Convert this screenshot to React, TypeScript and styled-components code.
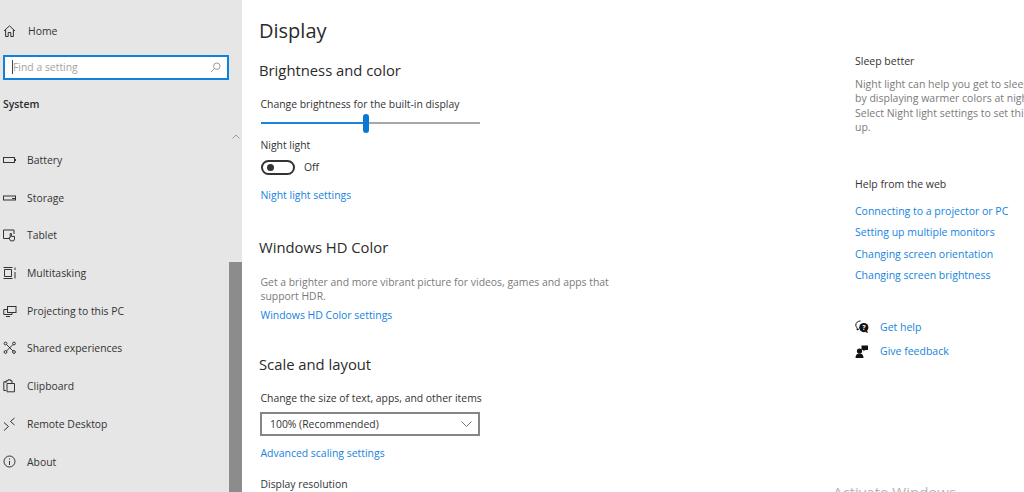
import React from "react";
import styled, { createGlobalStyle } from "styled-components";

const Global = createGlobalStyle`
  html, body { margin: 0; padding: 0; background: #fff; }
  body { font-family: "Open Sans", "Noto Sans", "Liberation Sans", sans-serif; color: #1f1f1f; overflow: hidden; }
  * { box-sizing: border-box; }
`;

const Page = styled.div`
  position: relative;
  width: 1024px;
  height: 492px;
  overflow: hidden;
  display: flex;
  background: #fff;
`;

const Sidebar = styled.aside`
  width: 242px;
  height: 492px;
  flex: none;
  background: #e6e6e6;
  display: flex;
`;

const SideContent = styled.div`
  width: 229px;
  flex: none;
  display: flex;
  flex-direction: column;
`;

const ScrollTrack = styled.div`
  width: 13px;
  flex: none;
  padding-top: 134px;
  display: flex;
  flex-direction: column;
  align-items: center;
  color: #9a9a9a;
`;

const ScrollThumb = styled.div`
  width: 100%;
  flex: 1;
  margin-top: 123px;
  background: #8c8c8c;
`;

const NavRow = styled.div`
  height: 37.7px;
  flex: none;
  display: flex;
  align-items: center;
  padding-left: 3px;
  font-size: 10.4px;
  color: #333;
`;

const HomeRow = styled(NavRow)`
  margin-top: 12px;
`;

const HomeLabel = styled.span`
  margin-left: 1px;
`;

const IconSlot = styled.span`
  width: 24px;
  height: 14px;
  flex: none;
  display: flex;
  align-items: center;
  color: #333;
`;

const SearchBox = styled.div`
  width: 226px;
  height: 25px;
  margin: 5px 0 0 3px;
  border: 2px solid #0f82dc;
  background: #fff;
  display: flex;
  align-items: center;
  padding: 0 6px 0 7px;
  font-size: 10.4px;
  color: #a3a3a3;
`;

const Caret = styled.span`
  width: 1px;
  height: 14px;
  background: #444;
  flex: none;
`;

const SearchText = styled.span`
  flex: 1;
`;

const SystemLabel = styled.div`
  margin: 15px 0 0 3px;
  height: 18px;
  line-height: 18px;
  font-size: 10.4px;
  font-weight: 600;
  color: #2b2b2b;
`;

const NavList = styled.nav`
  margin-top: 28.5px;
  display: flex;
  flex-direction: column;
`;

const Main = styled.main`
  width: 596px;
  flex: none;
  padding: 16px 0 0 17px;
`;

const Title = styled.h1`
  margin: 0;
  font-size: 20px;
  line-height: 30px;
  font-weight: 400;
  color: #2b2b2b;
`;

const Section = styled.h2<{ $top: number }>`
  margin: ${(p) => p.$top}px 0 0;
  font-size: 14.8px;
  line-height: 20px;
  font-weight: 400;
  color: #2b2b2b;
`;

const Label = styled.div<{ $top: number }>`
  font-size: 10.4px;
  line-height: 16px;
  margin: ${(p) => p.$top}px 0 0 1.5px;
  color: #333;
`;

const Link = styled.div`
  font-size: 10.5px;
  line-height: 16px;
  color: #1583e0;
`;

const MainLink = styled(Link)<{ $top: number }>`
  font-size: 10.45px;
  margin: ${(p) => p.$top}px 0 0 1.5px;
`;

const Slider = styled.div`
  width: 219px;
  height: 20px;
  margin: 1px 0 0 2px;
  display: flex;
  align-items: center;
`;

const TrackFill = styled.div`
  width: 102px;
  height: 2px;
  background: #1a84dc;
`;

const TrackRest = styled.div`
  height: 2px;
  flex: 1;
  background: #a8a8a8;
`;

const Thumb = styled.div`
  width: 6px;
  height: 19px;
  border-radius: 3px;
  background: #0878d4;
  flex: none;
`;

const ToggleRow = styled.div`
  display: flex;
  align-items: center;
  height: 16px;
  margin: 6px 0 0 2px;
  gap: 9px;
  font-size: 10.4px;
  color: #333;
`;

const Toggle = styled.div`
  width: 34px;
  height: 15px;
  border: 2px solid #333;
  border-radius: 8px;
  display: flex;
  align-items: center;
  padding-left: 4px;
`;

const Knob = styled.div`
  width: 7px;
  height: 7px;
  border-radius: 50%;
  background: #333;
`;

const Paragraph = styled.p`
  margin: 18px 0 0 1.5px;
  width: 360px;
  font-size: 10.4px;
  line-height: 14px;
  color: #7a7a7a;
`;

const Select = styled.div`
  width: 220px;
  height: 24px;
  margin: 6px 0 0 1px;
  border: 2px solid #868686;
  display: flex;
  align-items: center;
  justify-content: space-between;
  padding: 0 6px 0 8px;
  font-size: 10.4px;
  color: #333;
`;

const Aside = styled.aside`
  flex: none;
  width: 186px;
  padding: 53px 0 0 17px;
  white-space: nowrap;
`;

const AsideHeading = styled.div<{ $top?: number }>`
  margin-top: ${(p) => p.$top ?? 0}px;
  font-size: 10.5px;
  line-height: 16px;
  color: #333;
`;

const AsideText = styled.div`
  margin-top: 8px;
  font-size: 10.5px;
  line-height: 14.3px;
  color: #7a7a7a;
`;

const LinkList = styled.div`
  margin-top: 11px;
  display: flex;
  flex-direction: column;
  gap: 5.2px;
`;

const HelpRow = styled.div`
  display: flex;
  align-items: center;
  gap: 11px;
  height: 16px;
`;

const HelpList = styled.div`
  margin-top: 36px;
  display: flex;
  flex-direction: column;
  gap: 8.5px;
`;

const Watermark = styled.div`
  position: absolute;
  left: 833px;
  top: 482px;
  font-size: 15px;
  line-height: 20px;
  color: #b5b5b5;
  white-space: nowrap;
`;

const Svg: React.FC<{ children: React.ReactNode }> = ({ children }) => (
  <svg width={14} height={14} viewBox="0 0 14 14" fill="none" stroke="currentColor" strokeWidth="1">{children}</svg>
);

const icons: Record<string, React.ReactNode> = {
  home: <Svg><path d="M1 7 6.5 1.8 12 7M2.6 5.8V12.5H5.2V8.5H7.8V12.5H10.4V5.8" /></Svg>,
  battery: <Svg><rect x=".5" y="4.5" width="11" height="5" /><path d="M12.5 6V8" /></Svg>,
  storage: <Svg><rect x=".5" y="5" width="12" height="4" /><path d="M9 7.5H12" /></Svg>,
  tablet: <Svg><path d="M6 10.5H.5V2H11V6" /><path d="M7.5 12.8 6 9.8 7.2 9.5V5.5H8.4V8.4H11.5V11L10.8 12.8Z" /></Svg>,
  multi: <Svg><path d="M.5 1.5H9.5M.5 12.5H9.5M1.5 3.5H8.5V10.5H1.5ZM12 1.5V4M12 6V12.5" /></Svg>,
  project: <Svg><rect x="4.5" y="2.5" width="8.5" height="6" /><path d="M4.5 5.5H.8V10.5H9V8.5M3 12.5H7" /></Svg>,
  shared: <Svg><circle cx="2.5" cy="2.5" r="1.4" /><circle cx="11" cy="2.5" r="1.4" /><circle cx="2.5" cy="11" r="1.4" /><circle cx="11" cy="11" r="1.4" /><path d="M3.6 3.6 9.9 9.9M9.9 3.6 3.6 9.9" /></Svg>,
  clip: <Svg><path d="M3 11.5H.8V2.8H3M4 12.8H11.5V4.5H4ZM3 4V1.8H5V.8H7.5V1.8H9V4" /></Svg>,
  remote: <Svg><path d="M1 5.5 5.5 9.5 1 13.5M11.5 1 7.5 4.5 11.5 8" /></Svg>,
  about: <Svg><circle cx="6.5" cy="6.5" r="5.5" /><path d="M6.5 6V10M6.5 3.5V4.6" /></Svg>,
};

const navItems: [string, string][] = [
  ["battery", "Battery"],
  ["storage", "Storage"],
  ["tablet", "Tablet"],
  ["multi", "Multitasking"],
  ["project", "Projecting to this PC"],
  ["shared", "Shared experiences"],
  ["clip", "Clipboard"],
  ["remote", "Remote Desktop"],
  ["about", "About"],
];

const webLinks = [
  "Connecting to a projector or PC",
  "Setting up multiple monitors",
  "Changing screen orientation",
  "Changing screen brightness",
];

export default function App() {
  return (
    <Page>
      <Global />
      <Sidebar>
        <SideContent>
          <HomeRow>
            <IconSlot>{icons.home}</IconSlot>
            <HomeLabel>Home</HomeLabel>
          </HomeRow>
          <SearchBox>
            <Caret />
            <SearchText>Find a setting</SearchText>
            <svg width="11" height="11" viewBox="0 0 11 11" fill="none" stroke="#9a9a9a">
              <circle cx="6.8" cy="4.2" r="3.2" />
              <path d="M4.5 6.5 1 10" />
            </svg>
          </SearchBox>
          <SystemLabel>System</SystemLabel>
          <NavList>
            {navItems.map(([icon, label]) => (
              <NavRow key={label}>
                <IconSlot>{icons[icon]}</IconSlot>
                <span>{label}</span>
              </NavRow>
            ))}
          </NavList>
        </SideContent>
        <ScrollTrack>
          <svg width="8" height="5" viewBox="0 0 8 5" fill="none" stroke="currentColor">
            <path d="M.5 4.5 4 1 7.5 4.5" />
          </svg>
          <ScrollThumb />
        </ScrollTrack>
      </Sidebar>
      <Main>
        <Title>Display</Title>
        <Section $top={14}>Brightness and color</Section>
        <Label $top={16}>Change brightness for the built-in display</Label>
        <Slider>
          <TrackFill />
          <Thumb />
          <TrackRest />
        </Slider>
        <Label $top={4}>Night light</Label>
        <ToggleRow>
          <Toggle>
            <Knob />
          </Toggle>
          <span>Off</span>
        </ToggleRow>
        <MainLink $top={12}>Night light settings</MainLink>
        <Section $top={34}>Windows HD Color</Section>
        <Paragraph>
          Get a brighter and more vibrant picture for videos, games and apps that support HDR.
        </Paragraph>
        <MainLink $top={4}>Windows HD Color settings</MainLink>
        <Section $top={31}>Scale and layout</Section>
        <Label $top={16}>Change the size of text, apps, and other items</Label>
        <Select>
          <span>100% (Recommended)</span>
          <svg width="11" height="6" viewBox="0 0 11 6" fill="none" stroke="#777">
            <path d="M.5 .5 5.5 5.5 10.5 .5" />
          </svg>
        </Select>
        <MainLink $top={9}>Advanced scaling settings</MainLink>
        <Label $top={15}>Display resolution</Label>
      </Main>
      <Aside>
        <AsideHeading>Sleep better</AsideHeading>
        <AsideText>
          Night light can help you get to sleep
          <br />
          by displaying warmer colors at night.
          <br />
          Select Night light settings to set this
          <br />
          up.
        </AsideText>
        <AsideHeading $top={42}>Help from the web</AsideHeading>
        <LinkList>
          {webLinks.map((l) => (
            <Link key={l}>{l}</Link>
          ))}
        </LinkList>
        <HelpList>
          <HelpRow>
            <svg width="14" height="14" viewBox="0 0 14 14">
              <path d="M5.5 1C2.8 1 .8 2.8.8 5c0 1.2.6 2.2 1.5 3L2 10l2-1" fill="none" stroke="#111" />
              <circle cx="8.8" cy="7.6" r="4.6" fill="#111" />
              <path d="M12 10.5 13 13 10 12Z" fill="#111" />
              <text x="8.8" y="10" textAnchor="middle" fontSize="7" fontWeight="700" fill="#fff">?</text>
            </svg>
            <Link>Get help</Link>
          </HelpRow>
          <HelpRow>
            <svg width="14" height="14" viewBox="0 0 14 14" fill="#111">
              <circle cx="4.5" cy="7" r="2.6" />
              <path d="M.5 14c0-3 1.6-4.4 4-4.4s4 1.4 4 4.4Z" />
              <path d="M6.5 1.5H13V6H10L8.5 7.5V6H6.5Z" />
            </svg>
            <Link>Give feedback</Link>
          </HelpRow>
        </HelpList>
      </Aside>
      <Watermark>Activate Windows</Watermark>
    </Page>
  );
}
